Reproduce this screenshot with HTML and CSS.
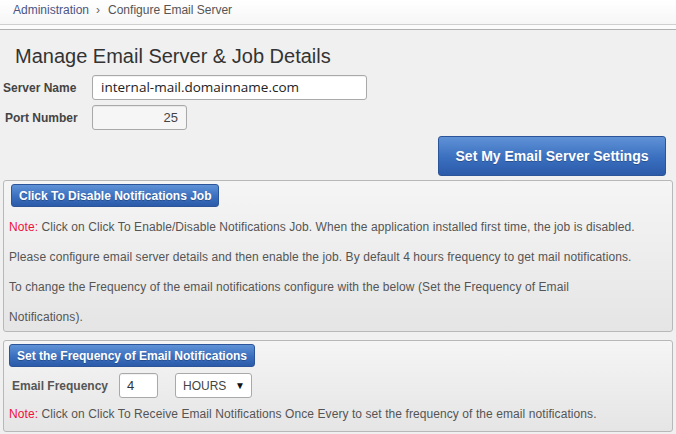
FILE: index.html
```html
<!DOCTYPE html>
<html>
<head>
<meta charset="utf-8">
<link rel="stylesheet" href="styles.css">
</head>
<body>
<div class="crumbs"><span class="crumb-link">Administration</span><span class="crumb-sep">›</span><span class="crumb-cur">Configure Email Server</span></div>
<div class="gap"></div>
<div class="main">
  <h1 class="title">Manage Email Server &amp; Job Details</h1>
  <div class="form">
    <label class="label">Server Name</label>
    <div class="field server">internal-mail.domainname.com</div>
    <label class="label label-port">Port Number</label>
    <div class="field port">25</div>
  </div>
  <div class="actions"><button class="btn btn-big">Set My Email Server Settings</button></div>
  <div class="panel panel-job">
    <button class="btn btn-small">Click To Disable Notifications Job</button>
    <div class="notes">
      <p><span class="note">Note:</span> Click on Click To Enable/Disable Notifications Job. When the application installed first time, the job is disabled.</p>
      <p>Please configure email server details and then enable the job. By default 4 hours frequency to get mail notifications.</p>
      <p>To change the Frequency of the email notifications configure with the below (Set the Frequency of Email Notifications).</p>
    </div>
  </div>
  <div class="panel panel-freq">
    <button class="btn btn-small btn-freq">Set the Frequency of Email Notifications</button>
    <div class="freq-row">
      <span class="freq-label">Email Frequency</span>
      <div class="field freq">4</div>
      <div class="select"><span>HOURS</span><span class="arrow">▼</span></div>
    </div>
    <p class="freq-note"><span class="note">Note:</span> Click on Click To Receive Email Notifications Once Every to set the frequency of the email notifications.</p>
  </div>
</div>
</body>
</html>
```
FILE: styles.css
```css
html, body {
  margin: 0;
  padding: 0;
  background: #ffffff;
  font-family: "Liberation Sans", Arial, sans-serif;
  font-size: 12px;
  color: #444;
}
.crumbs {
  height: 25px;
  box-sizing: border-box;
  padding: 3px 0 0 13px;
  line-height: 14px;
  background: linear-gradient(#ffffff, #f6f6f6);
  border-bottom: 1px solid #cfcfcf;
  font-size: 12px;
}
.crumb-link { color: #4a5585; }
.crumb-sep { color: #666; margin: 0 8px 0 7px; }
.crumb-cur { color: #555; }
.gap {
  height: 4px;
  background: #fbfbfb;
}
.main {
  border-top: 1px solid #b0b0b0;
  background: #f0f0f0;
  padding-bottom: 2px;
  min-height: 403px;
  box-sizing: border-box;
}
.title {
  margin: 14px 0 0 15px;
  font-size: 20px;
  font-weight: normal;
  line-height: 24px;
  color: #333;
}
.form {
  display: grid;
  grid-template-columns: 89px auto;
  row-gap: 5px;
  margin: 7px 0 0 3px;
  align-items: center;
  justify-items: start;
}
.label {
  font-weight: bold;
  color: #444;
  font-size: 12px;
}
.label-port { padding-left: 2px; }
.field {
  box-sizing: border-box;
  height: 25px;
  border: 1px solid #a9a9a9;
  border-radius: 3px;
  background: #fff;
  box-shadow: inset 0 1px 1px rgba(0,0,0,0.06);
  line-height: 23px;
}
.server {
  width: 275px;
  padding-left: 8px;
  font-family: "Open Sans", "Noto Sans", sans-serif;
  font-size: 13.5px;
  color: #222;
}
.port {
  width: 95px;
  text-align: right;
  padding-right: 8px;
  background: #f6f6f6;
  font-size: 13px;
  color: #444;
}
.actions {
  display: flex;
  justify-content: flex-end;
  margin: 6px 10px 0 0;
}
.btn {
  font-family: "Liberation Sans", Arial, sans-serif;
  font-weight: bold;
  color: #fff;
  border: 1px solid #2c5498;
  border-radius: 3px;
  background: linear-gradient(#5f92d6, #3a6fbf 55%, #2b5ba9);
  text-shadow: 0 1px 0 rgba(0,0,0,0.25);
  box-sizing: border-box;
  padding: 0;
  cursor: pointer;
}
.btn-big {
  width: 228px;
  height: 40px;
  font-size: 14px;
}
.btn-small {
  display: block;
  height: 23px;
  font-size: 12px;
  padding: 0 7px;
  margin-left: 2px;
}
.btn-freq {
  margin-left: 0;
}
.panel {
  margin: 0 3px;
  border: 1px solid #b8b8b8;
  border-radius: 3px;
  background: linear-gradient(#f5f5f5, #e5e5e5);
  box-sizing: border-box;
}
.panel-job {
  margin-top: 4px;
  padding: 3px 20px 0 5px;
  height: 152px;
}
.notes {
  margin-top: 5px;
  max-width: 632px;
}
.notes p {
  margin: 0;
  line-height: 30px;
  font-size: 12px;
  letter-spacing: 0.08px;
  color: #555;
}
.note { color: #f0103c; }
.panel-freq {
  margin-top: 8px;
  padding: 3px 30px 7px 5px;
}
.freq-row {
  display: flex;
  align-items: center;
  margin-top: 6px;
  height: 25px;
}
.freq-label {
  font-weight: bold;
  color: #555;
  margin-left: 3px;
  width: 107px;
}
.freq {
  width: 39px;
  padding-left: 7px;
  font-size: 13px;
  color: #333;
}
.select {
  margin-left: 17px;
  box-sizing: border-box;
  width: 77px;
  height: 25px;
  border: 1px solid #a9a9a9;
  border-radius: 3px;
  background: #fff;
  display: flex;
  align-items: center;
  justify-content: space-between;
  padding: 0 6px 0 7px;
  font-size: 12px;
  color: #444;
}
.arrow { font-size: 10px; color: #111; }
.freq-note {
  margin: 0;
  line-height: 20px;
  margin-top: 6px;
  color: #555;
  font-size: 12px;
  letter-spacing: 0.08px;
}
```
